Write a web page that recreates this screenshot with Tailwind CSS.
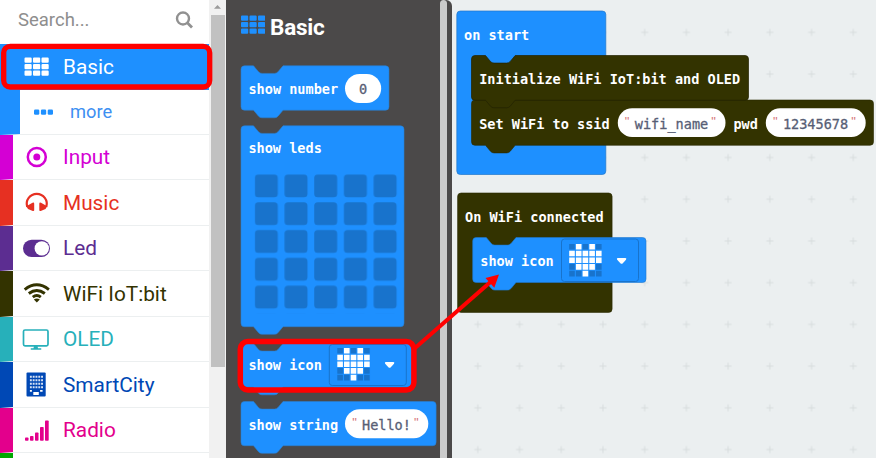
<!DOCTYPE html>
<html lang="en">
<head>
<meta charset="utf-8">
<title>Block editor</title>
<script src="https://cdn.jsdelivr.net/npm/@tailwindcss/browser@4"></script>
</head>
<body class="w-[876px] h-[458px] overflow-hidden bg-white">
<svg class="absolute size-0" aria-hidden="true">
  <defs>
    <g id="heart">
      <rect width="33" height="33" fill="#1e90ff"/>
      <g fill="#1873cc"><path d="M0 0h5.6v5.6H0zM13.4 0H19v5.6h-5.600zM26.800 0h5.600v5.600h-5.600zM0 20.100h5.600v5.600H0zM26.800 20.100h5.600v5.600h-5.600zM0 26.800h5.600v5.600H0zM6.700 26.800h5.600v5.600H6.700zM20.100 26.800h5.600v5.600h-5.600zM26.800 26.800h5.600v5.600h-5.600z"/></g>
      <g fill="#fff"><path d="M6.700 0h5.600v5.600H6.700zM20.100 0h5.600v5.600h-5.600zM0 6.700h5.600v5.600H0zM6.700 6.700h5.600v5.600H6.700zM13.400 6.700H19v5.600h-5.600zM20.100 6.700h5.600v5.600h-5.600zM26.800 6.700h5.600v5.600h-5.600zM0 13.400h5.600V19H0zM6.700 13.400h5.600V19H6.700zM13.400 13.400H19V19h-5.600zM20.100 13.400h5.600V19h-5.600zM26.800 13.400h5.600V19h-5.600zM6.700 20.100h5.600v5.600H6.700zM13.400 20.100H19v5.600h-5.600zM20.100 20.100h5.600v5.600h-5.600zM13.400 26.800H19v5.600h-5.600z"/></g>
    </g>
    <path id="caret" d="M1 0h7.600q1.600.3.600 1.700L6 5.200q-1.200 1-2.400 0L.4 1.700Q-.6.300 1 0z" fill="#fff"/>
    <pattern id="leds" width="29.7" height="27.800" patternUnits="userSpaceOnUse" x="14.600" y="49.200"><rect x=".2" y=".2" width="23" height="23" rx="3.500" fill="#1873cc"/></pattern>
    <pattern id="plus" width="41.720" height="41.720" patternUnits="userSpaceOnUse" x="-1.980" y="11.500"><path d="M17.400 20.860h7M20.860 17.400v7" stroke="#d5dadb" stroke-width=".9"/></pattern>
  </defs>
</svg>

<div class="relative flex h-full w-full">
  <!-- Toolbox -->
  <aside class="flex w-[209px] shrink-0 flex-col font-[Roboto,sans-serif] text-[20.800px] bg-white">
    <div class="flex h-[44px] shrink-0 items-center justify-between pl-[18px] pr-[15px] pb-[3px]">
      <span class="pt-px text-[18.500px] text-[#8e8e8e]">Search...</span>
      <svg class="size-[19px]" viewBox="0 0 19 19" fill="none" stroke="#919191" stroke-width="2.400"><circle cx="8" cy="7.500" r="6"/><path d="M12.300 11.800 17 16.500" stroke-width="2.800"/></svg>
    </div>
    <div class="flex h-[45.500px] shrink-0 items-center bg-[#1e90ff] pl-[24px] text-white">
      <svg class="h-[20px] w-[39px]" viewBox="0 0 39 20" fill="#fff"><path id="tiles" d="M1.500.500h5.200q1 0 1 1v3.300q0 1-1 1H1.500q-1 0-1-1V1.500q0-1 1-1zm8.500 0h5.200q1 0 1 1v3.300q0 1-1 1H10q-1 0-1-1V1.500q0-1 1-1zm8.500 0h5.200q1 0 1 1v3.300q0 1-1 1h-5.200q-1 0-1-1V1.500q0-1 1-1zM1.500 7h5.200q1 0 1 1v3.300q0 1-1 1H1.500q-1 0-1-1V8q0-1 1-1zM10 7h5.200q1 0 1 1v3.300q0 1-1 1H10q-1 0-1-1V8q0-1 1-1zm8.500 0h5.200q1 0 1 1v3.300q0 1-1 1h-5.200q-1 0-1-1V8q0-1 1-1zM1.500 13.500h5.200q1 0 1 1v3.300q0 1-1 1H1.500q-1 0-1-1v-3.300q0-1 1-1zm8.500 0h5.200q1 0 1 1v3.300q0 1-1 1H10q-1 0-1-1v-3.300q0-1 1-1zm8.500 0h5.200q1 0 1 1v3.300q0 1-1 1h-5.200q-1 0-1-1v-3.300q0-1 1-1z"/></svg>
      <span class="pt-px">Basic</span>
    </div>
    <div class="flex h-[45px] shrink-0 items-center border-b border-[#eceff0] border-l-[20px] border-l-[#1e90ff] pl-[14px] text-[#3d8ff2]">
      <svg class="h-[6px] w-[36px]" viewBox="0 0 36 6" fill="#1e90ff"><rect y=".5" width="5.300" height="5.200" rx="1.300"/><rect x="6.900" y=".5" width="5.300" height="5.200" rx="1.300"/><rect x="13.700" y=".5" width="5.300" height="5.200" rx="1.300"/></svg>
      <span class="pt-px text-[18.300px]">more</span>
    </div>
    <div class="flex h-[45.500px] shrink-0 items-center border-b border-[#eceff0] border-l-[13px] border-l-[#d400d4] pl-[9px] text-[#d400d4]">
      <svg class="mr-[13px] size-[28px]" viewBox="0 0 28 28"><circle cx="14.800" cy="14" r="9" fill="none" stroke="currentColor" stroke-width="2.500"/><circle cx="14.800" cy="14" r="3.500" fill="currentColor"/></svg><span class="pt-[2px]">Input</span>
    </div>
    <div class="flex h-[45.500px] shrink-0 items-center border-b border-[#eceff0] border-l-[13px] border-l-[#e63022] pl-[9px] text-[#e63022]">
      <svg class="mr-[13px] size-[28px]" viewBox="0 0 28 28"><path d="M5.200 18.800a10 10 0 1 1 19.100 0" fill="none" stroke="currentColor" stroke-width="2.200"/><path d="M4.300 18.200 10.500 14.800q1.700-.8 1.700 1v6.500q0 1-1.400.7L6 21zm20.900 0L19 14.800q-1.700-.8-1.700 1v6.500q0 1 1.400.7l4.800-2z" fill="currentColor"/></svg><span class="pt-[2px]">Music</span>
    </div>
    <div class="flex h-[45.500px] shrink-0 items-center border-b border-[#eceff0] border-l-[13px] border-l-[#5c2d91] pl-[9px] text-[#5c2d91]">
      <svg class="mr-[13px] size-[28px]" viewBox="0 0 28 28"><rect x="1" y="5.800" width="27" height="17.200" rx="8.600" fill="currentColor"/><circle cx="19.800" cy="14.400" r="7.200" fill="#fff"/></svg><span class="pt-[2px]">Led</span>
    </div>
    <div class="flex h-[45.500px] shrink-0 items-center border-b border-[#eceff0] border-l-[13px] border-l-[#333300] pl-[9px] text-[#333300]">
      <svg class="mr-[13px] size-[28px]" viewBox="0 0 28 28"><g fill="none" stroke="currentColor" stroke-width="2.900"><path d="M2.700 10.600q12-9.500 24.200 0M6.800 14.500q8-6.200 16 0M10.800 18.200q4-3.300 8 0"/></g><path d="M11.800 20.400q3-2 6 0l-3 3.200z" fill="currentColor"/></svg><span class="pt-[2px]">WiFi IoT:bit</span>
    </div>
    <div class="flex h-[45.500px] shrink-0 items-center border-b border-[#eceff0] border-l-[13px] border-l-[#27b0ba] pl-[9px] text-[#27b0ba]">
      <svg class="mr-[13px] size-[28px]" viewBox="0 0 28 28"><rect x="1.500" y="5" width="24.500" height="15.800" rx="1.500" fill="none" stroke="currentColor" stroke-width="1.700"/><path d="M12 21h3.500l.5 2.200h3q1 .8 0 1.600H9q-1-.8 0-1.600h2.500z" fill="currentColor"/></svg><span class="pt-[2px]">OLED</span>
    </div>
    <div class="flex h-[45.500px] shrink-0 items-center border-b border-[#eceff0] border-l-[13px] border-l-[#0048b5] pl-[9px] text-[#0048b5]">
      <svg class="mr-[13px] size-[28px]" viewBox="0 0 28 28"><rect x="4.500" y="2.500" width="19.200" height="24" rx="1" fill="currentColor"/><path d="M7.900 6.800H21M7.900 10.300H21M7.900 13.800H21M7.900 17.300H21" stroke="#fff" stroke-width="1.900" stroke-dasharray="1.900 .9" opacity=".85"/><path d="M7.900 20.800h2m8.200 0h2.500" stroke="#fff" stroke-width="1.700"/><path d="M11.300 22h5.500V25h-5.500z" fill="#fff"/></svg><span class="pt-[2px]">SmartCity</span>
    </div>
    <div class="flex h-[45.500px] shrink-0 items-center border-b border-[#eceff0] border-l-[13px] border-l-[#e3008c] pl-[9px] text-[#e3008c]">
      <svg class="mr-[13px] size-[28px]" viewBox="0 0 28 28" fill="currentColor"><rect x="3" y="21.500" width="3.500" height="3.300" rx=".8"/><rect x="8" y="20" width="3.500" height="4.800" rx=".8"/><rect x="13" y="16.500" width="3.500" height="8.300" rx=".8"/><rect x="18" y="11" width="3.700" height="13.800" rx=".8"/><rect x="23" y="4.500" width="3.700" height="20.300" rx=".8"/></svg><span class="pt-[2px]">Radio</span>
    </div>
    <div class="h-[10px] border-l-[13px] border-l-[#00a800]"></div>
  </aside>

  <!-- Toolbox scrollbar -->
  <div class="flex w-[17px] shrink-0 flex-col items-center bg-[#f1f1f1] pl-px pr-[1px]">
    <svg class="h-[15px] w-[15px] shrink-0" viewBox="0 0 15 15"><path d="M4 8.700 7.500 5 11 8.700z" fill="#9b9b9b"/></svg>
    <div class="h-[352px] w-[14px] bg-[#c1c1c1]"></div>
  </div>

  <!-- Flyout -->
  <section class="flex w-[226px] shrink-0 bg-[#ebeff0]">
    <div class="flex flex-1 rounded-tr-[6px] bg-[#4b4949]">
      <div class="flex w-[214px] shrink-0 flex-col pl-[14px]">
        <div class="flex h-[65px] shrink-0 items-start gap-[5px] pt-[12px] font-[Roboto,sans-serif] text-[22.500px] leading-[28px] font-bold text-white">
          <svg class="mt-[3px] h-[20px] w-[25px]" viewBox="0 0 25 20"><use href="#tiles" x=".5" fill="#1e90ff"/></svg>
          <span class="pt-px tracking-[-0.2px]">Basic</span>
        </div>
        <svg class="h-[59.700px] w-[200px] shrink-0 overflow-visible font-['DejaVu_Sans_Mono',monospace] text-[13.560px] font-bold" viewBox="0 0 200 59.700">
          <path d="M1 4.300q0-3.500 3.500-3.500H13.500l5 6q1.400 1.600 3.500 1.600H34.500q2.100 0 3.500-1.600l5-6H145.500q3.500 0 3.500 3.500v37.400q0 3.500-3.500 3.500H43l-5 6q-1.400 1.600-3.500 1.600H22q-2.100 0-3.500-1.600l-5-6H4.500Q1 45.200 1 41.700z" fill="#1e90ff" stroke="#2a7fd0" stroke-width=".6"/>
          <text x="8.400" y="29" fill="#fff">show number</text>
          <rect x="105" y="9" width="36.200" height="29" rx="14.500" fill="#fff"/>
          <text x="119" y="29.400" fill="#575e75" stroke="#575e75" stroke-width=".3" class="font-normal">0</text>
        </svg>
        <svg class="h-[218px] w-[200px] shrink-0 overflow-visible font-['DejaVu_Sans_Mono',monospace] text-[13.560px] font-bold" viewBox="0 0 200 218">
          <path d="M1 4.300q0-3.500 3.500-3.500H13.500l5 6q1.400 1.600 3.500 1.600H34.500q2.100 0 3.500-1.600l5-6H160.500q3.500 0 3.500 3.500v193.900q0 3.500-3.500 3.500H43l-5 6q-1.400 1.600-3.500 1.600H22q-2.100 0-3.500-1.600l-5-6H4.500Q1 201.700 1 198.200z" fill="#1e90ff" stroke="#2a7fd0" stroke-width=".6"/>
          <text x="8.400" y="28" fill="#fff">show leds</text>
          <rect x="14.600" y="49.200" width="148.500" height="138.900" fill="url(#leds)"/>
        </svg>
        <svg class="h-[58px] w-[200px] shrink-0 overflow-visible font-['DejaVu_Sans_Mono',monospace] text-[13.560px] font-bold" viewBox="0 0 200 58">
          <path d="M1 4q0-3.500 3.500-3.500H13.500l5 6q1.400 1.600 3.500 1.600H34.500q2.100 0 3.500-1.600l5-6H171q3.500 0 3.500 3.500v36.700q0 3.500-3.500 3.500H43l-5 6q-1.400 1.600-3.500 1.600H22q-2.100 0-3.500-1.600l-5-6H4.500Q1 44.200 1 40.700z" fill="#1e90ff" stroke="#2a7fd0" stroke-width=".6"/>
          <text x="8.400" y="26.500" fill="#fff">show icon</text>
          <rect x="89.300" y="1.500" width="77" height="41" rx="3" fill="none" stroke="#1873cc"/>
          <use href="#heart" x="97.300" y="5"/><use href="#caret" x="144.800" y="19"/>
        </svg>
        <svg class="h-[56px] w-[200px] shrink-0 overflow-visible font-['DejaVu_Sans_Mono',monospace] text-[13.560px] font-bold" viewBox="0 0 200 56">
          <path d="M1 4q0-3.500 3.500-3.500H13.500l5 6q1.400 1.600 3.500 1.600H34.500q2.100 0 3.500-1.600l5-6H192.600q3.500 0 3.500 3.500v37.200q0 3.500-3.500 3.500H43l-5 6q-1.400 1.600-3.500 1.600H22q-2.100 0-3.500-1.600l-5-6H4.500Q1 44.700 1 41.200z" fill="#1e90ff" stroke="#2a7fd0" stroke-width=".6"/>
          <text x="8.400" y="28.500" fill="#fff">show string</text>
          <rect x="105" y="8.300" width="83.300" height="29" rx="14.500" fill="#fff"/>
          <g class="font-normal"><text x="122" y="28.500" fill="#575e75" stroke="#575e75" stroke-width=".3">Hello!</text><g class="font-['Liberation_Sans',sans-serif] text-[13px]" fill="#d6757a"><text x="112.300" y="26.200">"</text><text x="174" y="26.200">"</text></g></g>
        </svg>
      </div>
      <div class="h-[464px] w-[7px] rounded-t-full bg-[#cbcbcb]"></div>
    </div>
  </section>

  <!-- Workspace -->
  <main class="flex-1 bg-[#ebeff0]">
    <svg class="block h-[458px] w-[424px] font-['DejaVu_Sans_Mono',monospace] text-[13.560px] font-bold" viewBox="452 0 424 458">
      <rect x="455" width="421" height="458" fill="url(#plus)"/>
      <rect x="456.800" y="11" width="149" height="163.500" rx="3.500" fill="#1e90ff" stroke="#1f77cc" stroke-width=".7"/>
      <text x="464" y="39.500" fill="#fff">on start</text>
      <path d="M471.500 103.500q0-3.500 3.500-3.500H870q3.500 0 3.500 3.500v38.300q0 3.500-3.500 3.500H515.200l-5 6q-1.400 1.600-3.500 1.600H494q-2.100 0-3.500-1.600l-5-6H475q-3.500 0-3.500-3.500z" fill="#333300" stroke="#292900" stroke-width=".6"/>
      <path d="M471.500 59q0-3.500 3.500-3.500H485.500l5 6q1.400 1.600 3.500 1.600H506.700q2.100 0 3.500-1.600l5-6H745q3.500 0 3.500 3.500V97q0 3.200-3.500 3.200H515.200l-5 6q-1.400 1.600-3.500 1.600H494q-2.100 0-3.500-1.600l-5-6H475q-3.500 0-3.500-3.200z" fill="#333300" stroke="#222200" stroke-width=".7"/>
      <text x="479.200" y="84" fill="#fff">Initialize WiFi IoT:bit and OLED</text>
      <text x="479.200" y="128.500" fill="#fff">Set WiFi to ssid</text>
      <rect x="617.800" y="108.300" width="107.700" height="28.700" rx="14.350" fill="#fff"/>
      <text x="733.400" y="128.500" fill="#fff">pwd</text>
      <rect x="765.800" y="108.300" width="99.900" height="28.700" rx="14.350" fill="#fff"/>
      <g class="font-normal" fill="#575e75" stroke="#575e75" stroke-width=".3"><text x="634.800" y="128.500">wifi_name</text><text x="782.900" y="128.500">12345678</text></g>
      <g class="font-['Liberation_Sans',sans-serif] text-[13px] font-normal" fill="#d6757a"><text x="624.800" y="126.200">"</text><text x="711.300" y="126.200">"</text><text x="773" y="126.200">"</text><text x="851.300" y="126.200">"</text></g>

      <rect x="457.600" y="193" width="154.500" height="119.400" rx="3.500" fill="#333300" stroke="#292900" stroke-width=".6"/>
      <text x="465" y="221.500" fill="#fff">On WiFi connected</text>
      <path d="M472.700 241q0-3.500 3.500-3.500H486.300l5 6q1.400 1.600 3.500 1.600H507.500q2.100 0 3.500-1.600l5-6H642.500q3.500 0 3.500 3.500V279q0 3.500-3.500 3.500H516l-5 6q-1.400 1.600-3.500 1.600H494.800q-2.100 0-3.500-1.600l-5-6H476.200q-3.500 0-3.500-3.500z" fill="#1e90ff" stroke="#1f77cc" stroke-width=".6"/>
      <text x="480.300" y="265.800" fill="#fff">show icon</text>
      <rect x="561.500" y="239" width="77" height="42.500" rx="3" fill="none" stroke="#1873cc"/>
      <use href="#heart" x="569.200" y="244"/><use href="#caret" x="616.800" y="258"/>
    </svg>
  </main>

  <!-- Callouts -->
  <svg class="pointer-events-none absolute inset-0 h-[458px] w-[876px]" viewBox="0 0 876 458" fill="none" stroke="#f00">
    <rect x="3.700" y="46.300" width="206" height="40.700" rx="6.500" stroke-width="5.300"/>
    <rect x="240.300" y="341.600" width="173.600" height="48.300" rx="7.500" stroke-width="5.500"/>
    <path d="M414.500 348.500 491 281.500" stroke-width="4"/>
    <path d="M499 274.500 485.500 278 494.300 287.800z" fill="#f00" stroke="none"/>
  </svg>
</div>
</body>
</html>
